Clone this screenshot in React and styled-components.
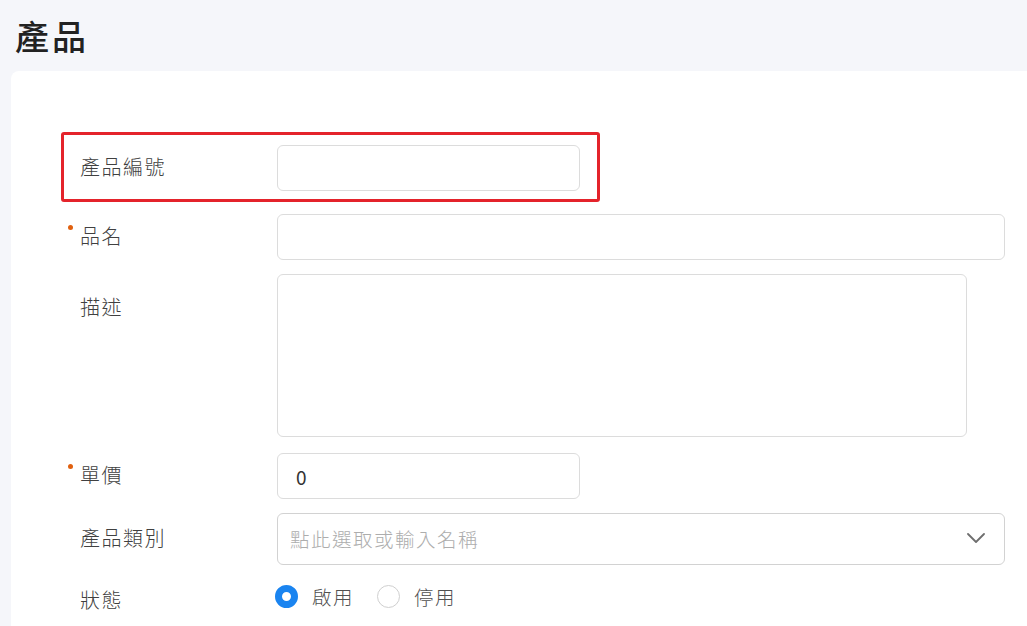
import React, { useState } from 'react';
import styled, { createGlobalStyle } from 'styled-components';

const GlobalStyle = createGlobalStyle`
  html, body {
    margin: 0;
    padding: 0;
    background: #f5f6fa;
    font-family: 'Noto Sans CJK TC', 'Noto Sans', sans-serif;
    overflow: hidden;
  }
  * { box-sizing: border-box; }
`;

const Page = styled.div`
  display: flex;
  flex-direction: column;
  min-height: 626px;
`;

const Header = styled.header`
  height: 71px;
  display: flex;
  align-items: center;
  padding: 0 0 0 15px;
`;

const Title = styled.h1`
  margin: 0;
  font-size: 34px;
  font-weight: 500;
  letter-spacing: 3px;
  color: #222;
`;

const Card = styled.main`
  flex: 1;
  margin-left: 11px;
  background: #fff;
  border-radius: 8px 0 0 0;
  padding: 74px 22px 0 69px;
`;

const Row = styled.div`
  position: relative;
  display: flex;
  align-items: ${p => (p.$top ? 'flex-start' : 'center')};
  margin-bottom: ${p => p.$gap || 14}px;
  width: ${p => (p.$fit ? 'fit-content' : 'auto')};
`;

const Highlight = styled.div`
  position: absolute;
  left: -19px;
  top: -13px;
  width: 539px;
  height: 70px;
  border: 3.5px solid #e4232b;
  border-radius: 3px;
  pointer-events: none;
`;

const Label = styled.label`
  position: relative;
  flex: 0 0 197px;
  font-size: 20px;
  letter-spacing: 1.5px;
  color: #404040;
  font-weight: 300;
  margin-top: ${p => p.$offset || -3}px;

  ${p => p.$required && `
    &::before {
      content: '';
      position: absolute;
      left: -12px;
      top: 4px;
      width: 5px;
      height: 5px;
      border-radius: 50%;
      background: #e0600f;
    }
  `}
`;

const Input = styled.input`
  width: ${p => p.$w || 728}px;
  height: 46px;
  border: 1px solid #dcdcdc;
  border-radius: 6px;
  padding: 0 18px;
  font-family: inherit;
  font-size: 19px;
  color: #333;
  outline: none;
  background: #fff;
`;

const TextArea = styled.textarea`
  width: 690px;
  height: 163px;
  border: 1px solid #dcdcdc;
  border-radius: 6px;
  resize: none;
  outline: none;
  font-family: inherit;
  font-size: 19px;
`;

const Select = styled.div`
  width: 728px;
  height: 52px;
  border: 1px solid #d2d2d2;
  border-radius: 6px;
  display: flex;
  align-items: center;
  justify-content: space-between;
  padding: 0 19px 2px 12px;
`;

const Placeholder = styled.span`
  font-size: 19.5px;
  letter-spacing: 1.5px;
  color: #adadad;
  font-weight: 300;
`;

const RadioGroup = styled.div`
  display: flex;
  align-items: center;
  margin-top: -9px;
  margin-left: -2px;
`;

const RadioItem = styled.label`
  display: flex;
  align-items: center;
  gap: 14px;
  margin-right: 23px;
  cursor: pointer;
  font-size: 19.5px;
  letter-spacing: 1.5px;
  color: #505050;
  font-weight: 300;
`;

const RadioDot = styled.span`
  width: 23px;
  height: 23px;
  border-radius: 50%;
  box-sizing: border-box;
  border: ${p => (p.$on ? '7px solid #1a84f0' : '1.5px solid #cfcfcf')};
  background: #fff;
`;

function Chevron() {
  return (
    <svg width="18" height="10" viewBox="0 0 18 10" fill="none">
      <path d="M1 1l8 8 8-8" stroke="#6e6e6e" strokeWidth="1.8" strokeLinecap="round" strokeLinejoin="round" />
    </svg>
  );
}

export default function App() {
  const [status, setStatus] = useState('on');
  const [price, setPrice] = useState('0');

  return (
    <Page>
      <GlobalStyle />
      <Header>
        <Title>產品</Title>
      </Header>
      <Card>
        <Row $fit $gap={23}>
          <Highlight />
          <Label>產品編號</Label>
          <Input $w={303} />
        </Row>
        <Row>
          <Label $required>品名</Label>
          <Input />
        </Row>
        <Row $top $gap={16}>
          <Label $offset={18}>描述</Label>
          <TextArea />
        </Row>
        <Row>
          <Label $required>單價</Label>
          <Input $w={303} value={price} onChange={e => setPrice(e.target.value)} />
        </Row>
        <Row $gap={13}>
          <Label>產品類別</Label>
          <Select>
            <Placeholder>點此選取或輸入名稱</Placeholder>
            <Chevron />
          </Select>
        </Row>
        <Row style={{ height: 46 }}>
          <Label $offset={0}>狀態</Label>
          <RadioGroup>
            <RadioItem onClick={() => setStatus('on')}>
              <RadioDot $on={status === 'on'} />
              啟用
            </RadioItem>
            <RadioItem onClick={() => setStatus('off')}>
              <RadioDot $on={status === 'off'} />
              停用
            </RadioItem>
          </RadioGroup>
        </Row>
      </Card>
    </Page>
  );
}
